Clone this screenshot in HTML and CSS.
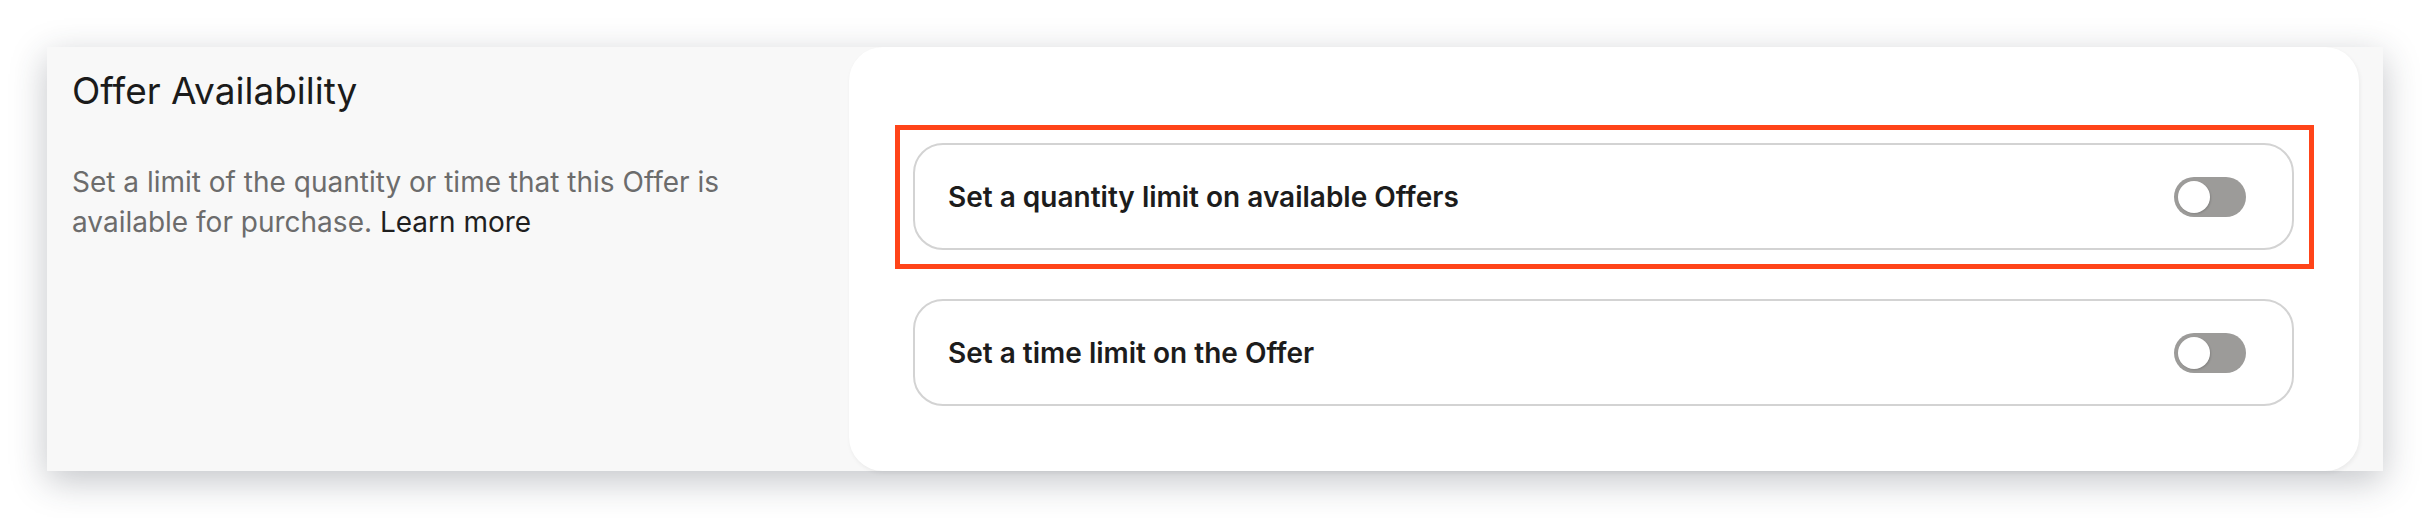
FILE: index.html
```html
<!DOCTYPE html>
<html lang="en">
<head>
<meta charset="utf-8">
<title>Offer Availability</title>
<link rel="stylesheet" href="styles.css">
</head>
<body>
<div class="page">
  <section class="card">
    <div class="intro">
      <h2 class="title">Offer Availability</h2>
      <p class="desc">Set a limit of the quantity or time that this Offer is available for purchase. <a class="link" href="#">Learn more</a></p>
    </div>
    <div class="panel">
      <div class="highlight">
        <div class="row">
          <span class="row-label">Set a quantity limit on available Offers</span>
          <span class="toggle"><span class="knob"></span></span>
        </div>
      </div>
      <div class="row">
        <span class="row-label">Set a time limit on the Offer</span>
        <span class="toggle"><span class="knob"></span></span>
      </div>
    </div>
  </section>
</div>
</body>
</html>
```

FILE: styles.css
```css
* { box-sizing: border-box; }
html, body {
  margin: 0;
  padding: 0;
  background: #ffffff;
}
body {
  font-family: Inter, "Noto Sans", sans-serif;
  width: 2430px;
  height: 518px;
  overflow: hidden;
}
.page {
  padding: 47px 47px 0 47px;
}
.card {
  display: flex;
  width: 2336px;
  height: 424px;
  background: #f8f8f8;
  box-shadow: 0 10px 34px rgba(40, 45, 60, 0.28);
  padding-right: 24px;
}
.intro {
  width: 802px;
  flex: none;
  padding: 22px 25px 0 25px;
}
.title {
  margin: 0;
  font-size: 37px;
  line-height: 44px;
  font-weight: 400;
  color: #1b1b1b;
  letter-spacing: 0;
}
.desc {
  margin: 50px 0 0 0;
  font-size: 28px;
  line-height: 39.5px;
  color: #6c6c6c;
  font-weight: 400;
}
.link {
  color: #1f1f1f;
  text-decoration: none;
}
.panel {
  flex: 1;
  background: #ffffff;
  border-radius: 34px;
  box-shadow: 1px 2px 4px rgba(0, 0, 0, 0.06);
  padding: 96px 65px 65px 64px;
  display: flex;
  flex-direction: column;
  gap: 49px;
}
.highlight {
  margin: -18px -20px -19px -18px;
  padding: 13px 15px 14px 13px;
  border: 5px solid #ff4419;
}
.row {
  height: 107px;
  border: 2px solid #d3d3d3;
  border-radius: 30px;
  display: flex;
  align-items: center;
  justify-content: space-between;
  padding: 0 46px 0 33px;
}
.row-label {
  font-size: 28px;
  font-weight: 600;
  color: #1c1c1c;
}
.toggle {
  width: 72px;
  height: 40px;
  border-radius: 20px;
  background: #9c9b99;
  padding: 4px;
  display: flex;
  align-items: center;
}
.knob {
  width: 32px;
  height: 32px;
  border-radius: 50%;
  background: #ffffff;
  box-shadow: 1px 1px 2px rgba(0, 0, 0, 0.15);
}
```
